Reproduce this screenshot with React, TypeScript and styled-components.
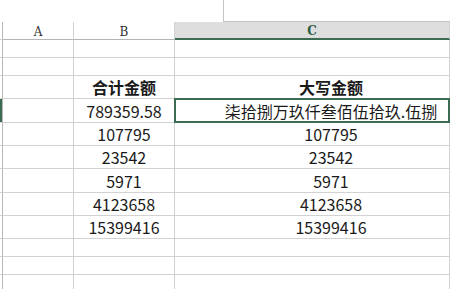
import React from 'react';
import styled, { createGlobalStyle } from 'styled-components';

const GlobalStyle = createGlobalStyle`
  html, body {
    margin: 0;
    padding: 0;
    background: #ffffff;
  }
  body {
    font-family: "Noto Sans CJK SC", "Noto Sans", sans-serif;
    color: #1f1f1f;
    overflow: hidden;
  }
`;

const Sheet = styled.div`
  width: 450px;
  height: 289px;
  display: flex;
  flex-direction: column;
  overflow: hidden;
`;

const TopBar = styled.div`
  height: 32px;
  display: flex;
  justify-content: flex-end;
  align-items: flex-start;
`;

const FormulaBox = styled.div`
  width: 226px;
  height: 21px;
  border-left: 1px solid #c4c4c4;
  border-bottom: 1px solid #c4c4c4;
`;

const Row = styled.div<{ $h: number }>`
  display: grid;
  grid-template-columns: 3px 71px 101px 1fr;
  height: ${(p) => p.$h}px;
  flex-shrink: 0;
`;

const Cell = styled.div<{ $bold?: boolean; $wide?: boolean }>`
  position: relative;
  display: flex;
  align-items: center;
  justify-content: center;
  border-right: 1px solid #d2d2d2;
  border-bottom: 1px solid #d2d2d2;
  font-size: 16px;
  font-weight: ${(p) => (p.$bold ? 700 : 400)};
  padding-left: ${(p) => (p.$wide ? '38px' : '0')};
  white-space: nowrap;
  line-height: 1;
  color: #1a1a1a;
`;

const RowHead = styled.div<{ $active?: boolean }>`
  border-right: 1px solid #b8b8b8;
  border-bottom: 1px solid #d2d2d2;
  background: ${(p) => (p.$active ? '#3d6b52' : '#ffffff')};
`;

const ColHead = styled.div<{ $active?: boolean }>`
  display: flex;
  align-items: center;
  justify-content: center;
  border-right: 1px solid #d2d2d2;
  border-bottom: ${(p) => (p.$active ? '2px solid #3d6b52' : '1px solid #b4b4b4')};
  background: ${(p) => (p.$active ? '#dedede' : '#ffffff')};
  font-family: "DejaVu Serif", "Liberation Serif", serif;
  font-size: 12px;
  font-weight: ${(p) => (p.$active ? 700 : 400)};
  color: ${(p) => (p.$active ? '#2c5a41' : '#333333')};
  padding-top: 2px;
  box-sizing: border-box;
`;

const Selection = styled.div`
  position: absolute;
  left: -1px;
  top: -1px;
  right: -1px;
  bottom: -1px;
  border: 2px solid #3d6b52;
  pointer-events: none;
`;

type DataRow = { h: number; b?: string; c?: string; bold?: boolean; active?: boolean };

const rows: DataRow[] = [
  { h: 18 },
  { h: 18 },
  { h: 23, b: '合计金额', c: '大写金额', bold: true },
  { h: 24, b: '789359.58', c: '柒拾捌万玖仟叁佰伍拾玖.伍捌', active: true },
  { h: 23, b: '107795', c: '107795' },
  { h: 23, b: '23542', c: '23542' },
  { h: 24, b: '5971', c: '5971' },
  { h: 23, b: '4123658', c: '4123658' },
  { h: 23, b: '15399416', c: '15399416' },
  { h: 18 },
  { h: 18 },
  { h: 18 },
];

export default function App() {
  return (
    <Sheet>
      <GlobalStyle />
      <TopBar>
        <FormulaBox />
      </TopBar>
      <Row $h={18}>
        <RowHead />
        <ColHead>A</ColHead>
        <ColHead>B</ColHead>
        <ColHead $active>C</ColHead>
      </Row>
      {rows.map((r, i) => (
        <Row key={i} $h={r.h}>
          <RowHead $active={r.active} />
          <Cell />
          <Cell $bold={r.bold}>{r.b}</Cell>
          <Cell $bold={r.bold} $wide>
            {r.c}
            {r.active && <Selection />}
          </Cell>
        </Row>
      ))}
    </Sheet>
  );
}
